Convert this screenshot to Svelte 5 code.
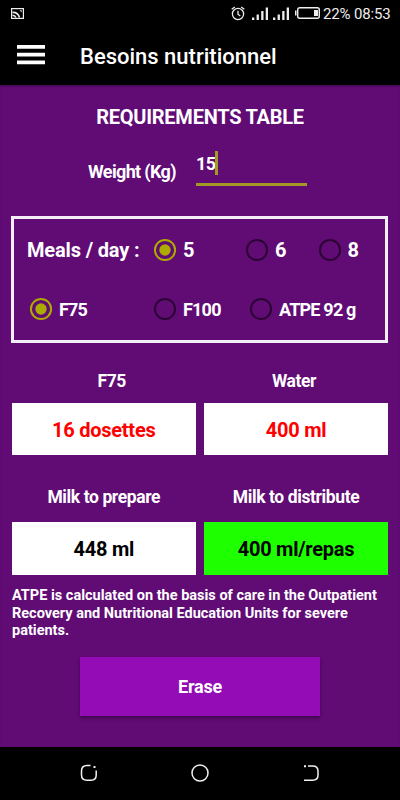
<script>
  const meals = [
    { label: '5', on: true, width: 92 },
    { label: '6', on: false, width: 72.5 },
    { label: '8', on: false, width: 50 }
  ];
  const products = [
    { label: 'F75', on: true, width: 124 },
    { label: 'F100', on: false, width: 96 },
    { label: 'ATPE 92 g', on: false, width: 120 }
  ];
  const results = [
    { title: 'F75', value: '16 dosettes', kind: 'red', place: 'indent' },
    { title: 'Water', value: '400 ml', kind: 'red', place: 'outdent' },
    { title: 'Milk to prepare', value: '448 ml', kind: 'black', place: '' },
    { title: 'Milk to distribute', value: '400 ml/repas', kind: 'green', place: '' }
  ];
</script>

{#snippet option(item)}
  <label class="option" style:width="{item.width}px">
    <svg width="24" height="24" viewBox="0 0 24 24" fill="none">
      <circle cx="12" cy="12" r="10.1" stroke={item.on ? '#acab00' : '#2b0434'} stroke-width="2" />
      {#if item.on}<circle cx="12" cy="12" r="5.7" fill="#acab00" />{/if}
    </svg>
    <span>{item.label}</span>
  </label>
{/snippet}

<div class="screen">
  <div class="status">
    <svg class="photo" width="13" height="11" viewBox="0 0 13 11" fill="none">
      <rect x=".6" y=".6" width="11.8" height="9.8" stroke="#eee" stroke-width="1.2" />
      <path d="M1.500 4.400c3-.2 6 1.600 7 5.100M1.500 7.300Q4 7.500 5 9.500" stroke="#eee" stroke-width="1.600" />
      <path d="M8.500 2.300h2.200v2.200z" fill="#eee" />
    </svg>
    <svg class="alarm" width="14" height="15" viewBox="0 0 14 15" fill="none" stroke="#eee" stroke-width="1.300">
      <circle cx="7" cy="8" r="5.600" />
      <path d="M.7 3.300 3.800.9M10.200.9l3.100 2.400M7 4.800V8.200l2.300 1.700" />
    </svg>
    <svg class="bars" width="38" height="14" viewBox="0 0 38 14" fill="#eee">
      <path d="M0 10.500h2.300V13H0zM4.600 7.500h2.300V13H4.600zM9.200 4h2.300v9H9.200zM13.700.5H16V13h-2.300zM21 10.500h2.300V13H21zM25.600 7.500h2.300V13h-2.300zM30.200 4h2.300v9h-2.300zM34.700.5H37V13h-2.300z" />
    </svg>
    <svg class="battery" width="25" height="12" viewBox="0 0 25 12" fill="none">
      <rect x="2.700" y=".7" width="21.600" height="10.600" rx="2" stroke="#eee" stroke-width="1.400" />
      <path d="M0 3.500h1.500v5H0zM19 3h4v6h-4z" fill="#eee" />
    </svg>
    <span class="clock">22% 08:53</span>
  </div>

  <header>
    <svg width="28" height="20" viewBox="0 0 28 20" fill="#fff">
      <path d="M0 0h28v3.800H0zM0 7.700h28v3.800H0zM0 15.400h28v3.800H0z" />
    </svg>
    <h1>Besoins nutritionnel</h1>
  </header>

  <main>
    <h2>REQUIREMENTS TABLE</h2>

    <div class="weight">
      <span class="weight-label">Weight (Kg)</span>
      <div class="field"><span>15</span><i></i></div>
    </div>

    <section class="choices">
      <div class="row meals">
        <span class="meals-label">Meals / day :</span>
        {#each meals as item}{@render option(item)}{/each}
      </div>
      <div class="row products">
        {#each products as item}{@render option(item)}{/each}
      </div>
    </section>

    <section class="results">
      {#each results as r}
        <div class="result">
          <h3 class={r.place}>{r.title}</h3>
          <div class="value {r.kind}">{r.value}</div>
        </div>
      {/each}
    </section>

    <p>ATPE is calculated on the basis of care in the Outpatient<br />Recovery and Nutritional Education Units for severe<br />patients.</p>

    <button>Erase</button>
  </main>

  <nav>
    <svg width="18" height="18" viewBox="0 0 18 18" fill="none" stroke="#f2f2f2" stroke-width="1.500">
      <path d="M10.500 1.500H7Q1.500 1.500 1.500 7V11Q1.500 16.200 7 16.200H11Q16.200 16.200 16.200 11V6.500" />
      <path d="M13.500 3h2" stroke-width="2" />
    </svg>
    <svg width="18" height="18" viewBox="0 0 18 18" fill="none" stroke="#f2f2f2" stroke-width="1.500">
      <circle cx="9" cy="9" r="8" />
    </svg>
    <svg width="18" height="18" viewBox="0 0 18 18" fill="none" stroke="#f2f2f2" stroke-width="1.500">
      <path d="M6 2h4.500Q16 2 16 7V11Q16 16.200 10.500 16.200H2" />
      <path d="M2 2.200h2" stroke-width="2" />
    </svg>
  </nav>
</div>

<style>
  :global(body) {
    background: #000;
  }
  .screen {
    width: 400px;
    height: 800px;
    overflow: hidden;
    display: flex;
    flex-direction: column;
    background: #000;
    color: #fff;
    font-family: Roboto, sans-serif;
    font-weight: 700;
  }
  svg {
    display: block;
    flex: none;
  }
  .status {
    height: 28px;
    box-sizing: border-box;
    padding: 0 9px 0 11px;
    display: flex;
    align-items: center;
  }
  .photo {
    margin-top: -1px;
  }
  .alarm {
    margin-left: auto;
    margin-top: -1px;
  }
  .bars {
    margin-left: 7px;
  }
  .battery {
    margin-left: 5px;
    margin-top: -2px;
  }
  .clock {
    margin-left: 3px;
    font-size: 15px;
    font-weight: 400;
    letter-spacing: -0.14px;
    width: 68px;
    color: #eee;
    white-space: nowrap;
  }
  header {
    height: 57px;
    box-sizing: border-box;
    padding: 0 17px;
    display: flex;
    align-items: center;
  }
  header svg {
    margin-top: -3px;
  }
  h1 {
    margin: 0 0 0 35px;
    font-size: 22px;
    font-weight: 500;
    line-height: 30px;
    white-space: nowrap;
  }
  main {
    height: 662px;
    box-sizing: border-box;
    padding: 17.500px 12px 0;
    background: #610b75;
    box-shadow: inset 0 2px 2px -1px #3c0748;
    display: flex;
    flex-direction: column;
  }
  h2 {
    margin: 0;
    font-size: 20px;
    line-height: 28px;
    letter-spacing: -0.25px;
    text-align: center;
    white-space: nowrap;
  }
  .weight {
    height: 55px;
    margin-top: 17.500px;
    display: flex;
    align-items: flex-start;
  }
  .weight-label {
    width: 108px;
    padding: 14px 0 0 76px;
    font-size: 18px;
    line-height: 20px;
    letter-spacing: -0.65px;
    white-space: nowrap;
  }
  .field {
    width: 111px;
    height: 35px;
    border-bottom: 3px solid #a39a25;
    display: flex;
    font-size: 18px;
    line-height: 31px;
    letter-spacing: -0.700px;
  }
  .field i {
    width: 3px;
    height: 24px;
    margin-top: 3px;
    margin-left: -0.700px;
    background: #a39a25;
  }
  .choices {
    height: 127px;
    margin: 13px 0 0 -1px;
    width: 377px;
    box-sizing: border-box;
    border: 3px solid #f4eef6;
    display: flex;
    flex-direction: column;
  }
  .row {
    display: flex;
    align-items: center;
  }
  .meals {
    height: 61px;
    padding-left: 13px;
    font-size: 20px;
    letter-spacing: -0.15px;
  }
  .meals-label {
    width: 126px;
    white-space: nowrap;
  }
  .products {
    height: 58px;
    padding-left: 15px;
    font-size: 18px;
    letter-spacing: -0.800px;
  }
  .option {
    display: flex;
    align-items: center;
    gap: 6px;
    white-space: nowrap;
  }
  .results {
    display: grid;
    grid-template-columns: 184.500px 184px;
    column-gap: 8px;
    row-gap: 32px;
    margin: 27px 0 0 -0.500px;
  }
  h3 {
    margin: 0;
    height: 35px;
    font-size: 17.500px;
    line-height: 21px;
    letter-spacing: -0.400px;
    text-align: center;
    box-sizing: border-box;
  }
  .indent {
    height: 33px;
    padding-left: 16px;
    line-height: 22px;
  }
  .outdent {
    height: 33px;
    padding-right: 4px;
    line-height: 22px;
  }
  .value {
    height: 52px;
    background: #fff;
    font-size: 20px;
    line-height: 54px;
    letter-spacing: -0.250px;
    text-align: center;
  }
  .red {
    color: #f00;
  }
  .black {
    color: #000;
  }
  .green {
    color: #000;
    background: #1eff00;
  }
  .black,
  .green {
    height: 53px;
  }
  p {
    margin: 12px 0 0;
    font-size: 14.500px;
    line-height: 17.500px;
    white-space: nowrap;
  }
  button {
    margin: 17px auto 0;
    width: 240px;
    height: 59px;
    padding: 0;
    border: 0;
    background: #930cb5;
    color: #fff;
    font: 700 18px/60px Roboto, sans-serif;
    letter-spacing: -0.200px;
    box-shadow: 0 2px 3px rgba(0, 0, 0, 0.35);
  }
  nav {
    height: 53px;
    box-sizing: border-box;
    padding: 0 80px 1px;
    display: flex;
    align-items: center;
    justify-content: space-between;
  }
</style>
